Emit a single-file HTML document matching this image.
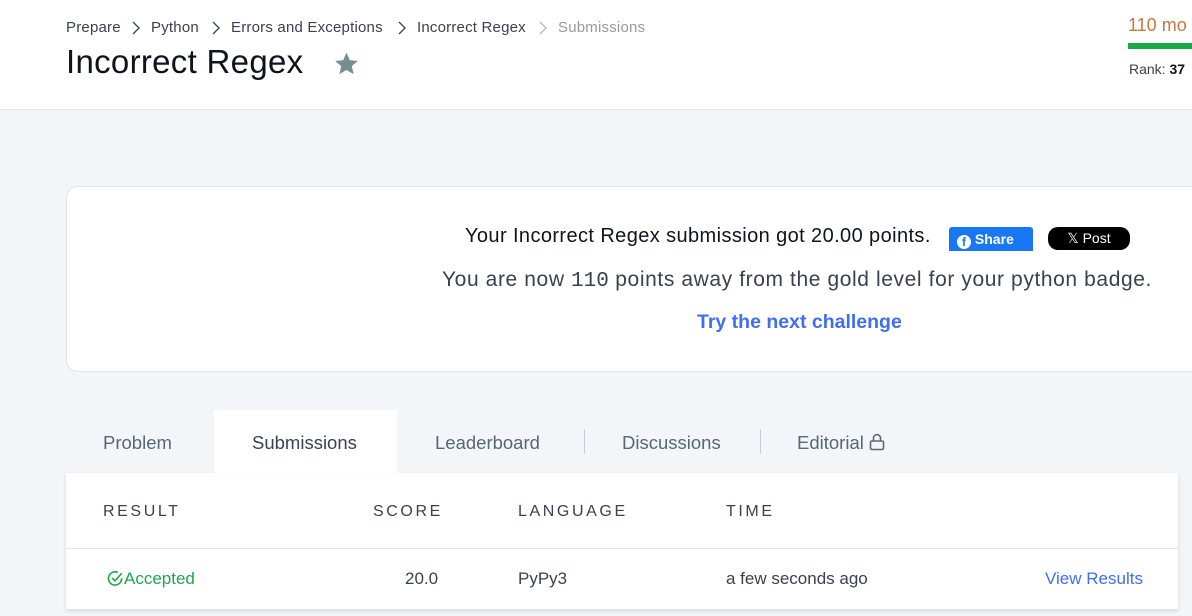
<!DOCTYPE html>
<html><head><meta charset="utf-8"><style>
*{margin:0;padding:0;box-sizing:border-box}
body{width:1192px;height:616px;overflow:hidden;background:#f4f5f9;font-family:"Liberation Sans",sans-serif;position:relative}
.hdr{position:absolute;left:0;top:0;width:1192px;height:110px;background:#fff;border-bottom:1px solid #e3e5ea}
.a{position:absolute;white-space:nowrap}
.crumb{font-size:15px;color:#39424e;top:19px;letter-spacing:0.2px}
.chev{position:absolute;top:20px}
.card{position:absolute;left:66px;top:186px;width:1140px;height:186px;background:#fff;border:1px solid #e0e3e8;border-radius:12px}
.tab{position:absolute;top:432px;font-size:18.5px;color:#576871}
.tbl{position:absolute;left:66px;top:473px;width:1112px;height:136px;background:#fff;box-shadow:0 2px 4px rgba(0,0,0,.12)}
.th{position:absolute;top:30px;font-size:16px;letter-spacing:2.6px;color:#39424e}
.td{position:absolute;top:96px;font-size:17px;color:#39424e}
</style></head><body>
<div class="hdr">
<div class="a crumb" style="left:66px">Prepare</div>
<svg class="chev" style="left:131px" width="10" height="16" viewBox="0 0 10 16"><path d="M2 2l6 6-6 6" fill="none" stroke="#39424e" stroke-width="1.3"/></svg>
<div class="a crumb" style="left:151px">Python</div>
<svg class="chev" style="left:211px" width="10" height="16" viewBox="0 0 10 16"><path d="M2 2l6 6-6 6" fill="none" stroke="#39424e" stroke-width="1.3"/></svg>
<div class="a crumb" style="left:231px">Errors and Exceptions</div>
<svg class="chev" style="left:397px" width="10" height="16" viewBox="0 0 10 16"><path d="M2 2l6 6-6 6" fill="none" stroke="#39424e" stroke-width="1.3"/></svg>
<div class="a crumb" style="left:417px">Incorrect Regex</div>
<svg class="chev" style="left:538px" width="10" height="16" viewBox="0 0 10 16"><path d="M2 2l6 6-6 6" fill="none" stroke="#bbb" stroke-width="1.3"/></svg>
<div class="a crumb" style="left:558px;color:#999">Submissions</div>
<div class="a" style="left:66px;top:43px;font-size:33px;color:#0e141e;letter-spacing:0.3px">Incorrect Regex</div>
<svg class="a" style="left:333px;top:51px" width="27" height="26" viewBox="0 0 24 24"><path fill="#738f93" d="M12 1.5l3.1 7 7.4.6-5.6 4.9 1.7 7.4L12 17.5 5.4 21.4l1.7-7.4L1.5 9.1l7.4-.6z"/></svg>
<div class="a" style="left:1128px;top:15px;font-size:18px;color:#c9763f">110 mo</div>
<div class="a" style="left:1128px;top:43px;width:64px;height:6px;background:#1ba94c"></div>
<div class="a" style="left:1129px;top:61px;font-size:14px;color:#39424e">Rank: <b style="color:#0e141e">37</b></div>
</div>
<div class="card">
<div class="a" style="left:398px;top:38px;font-size:20px;letter-spacing:0.4px;color:#0e141e">Your Incorrect Regex submission got 20.00 points.</div>
<div class="a" style="left:882px;top:40px;width:84px;height:24px;background:#1877f2;color:#fff;font-size:14px;font-weight:bold;border-radius:3px 3px 0 0;padding:4px 0 0 8px"><span style="display:inline-block;width:14px;height:14px;border-radius:50%;background:#fff;color:#1877f2;font-size:12px;text-align:center;line-height:15px;vertical-align:-2px">f</span> Share</div>
<div class="a" style="left:981px;top:40px;width:82px;height:23px;background:#000;color:#fff;font-size:14px;border-radius:10px;text-align:center;line-height:23px">𝕏 Post</div>
<div class="a" style="left:375px;top:81px;font-size:21px;letter-spacing:0.6px;color:#39424e">You are now <span style="font-family:'Liberation Mono',monospace;letter-spacing:0">110</span> points away from the gold level for your python badge.</div>
<div class="a" style="left:630px;top:124px;font-size:19.5px;font-weight:bold;color:#3f6ef5">Try the next challenge</div>
</div>
<div class="a" style="left:214px;top:410px;width:183px;height:64px;background:#fff"></div>
<div class="tab a" style="left:103px">Problem</div>
<div class="tab a" style="left:252px;color:#39424e">Submissions</div>
<div class="tab a" style="left:435px">Leaderboard</div>
<div class="a" style="left:584px;top:429px;width:1px;height:25px;background:#c7ccd2"></div>
<div class="tab a" style="left:622px">Discussions</div>
<div class="a" style="left:760px;top:429px;width:1px;height:25px;background:#c7ccd2"></div>
<div class="tab a" style="left:797px">Editorial <svg width="16" height="18" viewBox="0 0 16 18" style="vertical-align:-2px"><rect x="1.5" y="8" width="13" height="8.5" rx="1.5" fill="none" stroke="#576871" stroke-width="1.6"/><path d="M4.5 8V5a3.5 3.5 0 017 0v3" fill="none" stroke="#576871" stroke-width="1.6"/></svg></div>
<div class="tbl">
<div class="th a" style="left:37px">RESULT</div>
<div class="th a" style="left:307px">SCORE</div>
<div class="th a" style="left:452px">LANGUAGE</div>
<div class="th a" style="left:660px">TIME</div>
<div class="a" style="left:0;top:75px;width:1112px;height:1px;background:#e3e7eb"></div>
<div class="td a" style="left:41px;color:#1ba94c"><svg width="17" height="17" viewBox="0 0 18 18" style="vertical-align:-3px"><path d="M15.5 8.5A7 7 0 1 1 11.5 2.6" fill="none" stroke="#1ba94c" stroke-width="1.7"/><path d="M5.5 8.5l3 3 7-8" fill="none" stroke="#1ba94c" stroke-width="1.7"/></svg>Accepted</div>
<div class="td a" style="left:339px">20.0</div>
<div class="td a" style="left:452px">PyPy3</div>
<div class="td a" style="left:660px">a few seconds ago</div>
<div class="td a" style="left:979px;color:#3f6ef5">View Results</div>
</div>
</body></html>
